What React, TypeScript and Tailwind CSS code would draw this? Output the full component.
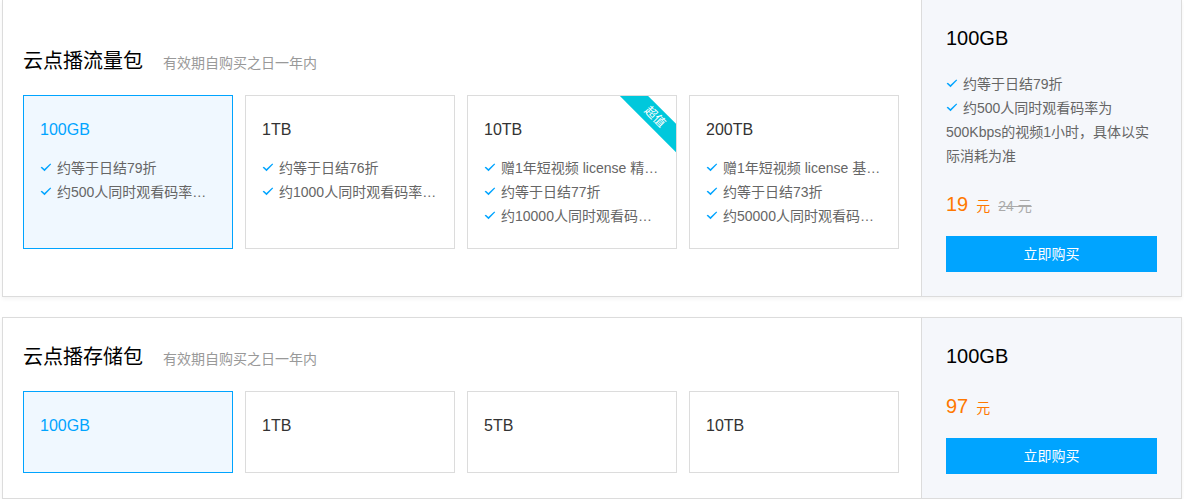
import React from "react";

type Perk = {
  summary: string;
  detail?: string;
};

type Plan = {
  size: string;
  perks?: Perk[];
  badge?: string;
  selected?: boolean;
};

type Pack = {
  id: string;
  title: string;
  note: string;
  plans: Plan[];
  price: string;
  oldPrice?: string;
};

const packs: Pack[] = [
  {
    id: "traffic",
    title: "云点播流量包",
    note: "有效期自购买之日一年内",
    price: "19",
    oldPrice: "24 元",
    plans: [
      {
        size: "100GB",
        selected: true,
        perks: [
          { summary: "约等于日结79折" },
          {
            summary: "约500人同时观看码率…",
            detail: "约500人同时观看码率为500Kbps的视频1小时，具体以实际消耗为准",
          },
        ],
      },
      {
        size: "1TB",
        perks: [{ summary: "约等于日结76折" }, { summary: "约1000人同时观看码率…" }],
      },
      {
        size: "10TB",
        badge: "超值",
        perks: [
          { summary: "赠1年短视频 license 精…" },
          { summary: "约等于日结77折" },
          { summary: "约10000人同时观看码…" },
        ],
      },
      {
        size: "200TB",
        perks: [
          { summary: "赠1年短视频 license 基…" },
          { summary: "约等于日结73折" },
          { summary: "约50000人同时观看码…" },
        ],
      },
    ],
  },
  {
    id: "storage",
    title: "云点播存储包",
    note: "有效期自购买之日一年内",
    price: "97",
    plans: [{ size: "100GB", selected: true }, { size: "1TB" }, { size: "5TB" }, { size: "10TB" }],
  },
];

function Check() {
  return (
    <svg className="mr-[5px] inline-block size-3 align-[-1px]" viewBox="0 0 12 12" fill="none" aria-hidden="true">
      <path d="M0.6 5.4 L1.9 4.8 L4.4 7 L10.3 1.5 L11.2 2.2 L4.5 9.3 Z" fill="#00a4ff" />
    </svg>
  );
}

function PlanCard({ plan }: { plan: Plan }) {
  return (
    <button
      type="button"
      aria-pressed={!!plan.selected}
      className={
        "relative flex min-w-0 cursor-pointer flex-col overflow-hidden border px-4 py-5 text-left " +
        (plan.selected ? "border-[#00a4ff] bg-[#f0f8ff]" : "border-[#dcdcdc] bg-white")
      }
    >
      <span className={"mb-3 text-base leading-7 " + (plan.selected ? "text-[#00a4ff]" : "text-[#333333]")}>
        {plan.size}
      </span>
      {plan.perks?.map((perk) => (
        <span key={perk.summary} className="w-full truncate text-sm leading-6 text-[#666666]">
          <Check />
          {perk.summary}
        </span>
      ))}
      {plan.badge && (
        <span className="absolute top-[11px] right-[-24px] w-[90px] rotate-45 bg-[#00c8dc] text-center text-xs leading-5 text-white">
          {plan.badge}
        </span>
      )}
    </button>
  );
}

function PackSection({ pack, first }: { pack: Pack; first: boolean }) {
  const current = pack.plans.find((plan) => plan.selected) ?? pack.plans[0];
  return (
    <section
      aria-labelledby={pack.id}
      className={"flex border-[#dcdcdc] bg-white shadow-[0_2px_4px_rgba(0,0,0,0.05)] " + (first ? "border-x border-b" : "border")}
    >
      <div className="flex min-w-0 flex-1 flex-col justify-center pr-[22px] pl-5">
        <div className="mb-5 flex h-7 items-baseline gap-5">
          <h2 id={pack.id} className="text-xl leading-7 text-black">
            {pack.title}
          </h2>
          <p className="text-sm leading-7 text-[#999999]">{pack.note}</p>
        </div>
        <div className="grid grid-cols-4 gap-3">
          {pack.plans.map((plan) => (
            <PlanCard key={plan.size} plan={plan} />
          ))}
        </div>
      </div>
      <aside className="w-[260px] shrink-0 border-l border-[#dcdcdc] bg-[#f5f7fb] p-6">
        <h3 className="text-xl leading-7 text-black">{current.size}</h3>
        {current.perks && (
          <ul className="mt-5 text-sm leading-6 text-[#666666]">
            {current.perks.map((perk) => (
              <li key={perk.summary}>
                <Check />
                {perk.detail ?? perk.summary}
              </li>
            ))}
          </ul>
        )}
        <p className="mt-5 mb-4 flex h-8 items-baseline gap-2 text-sm leading-8 text-[#ff7800]">
          <span className="text-xl leading-8">{pack.price}</span>
          <span>元</span>
          {pack.oldPrice && <del className="text-[#aaaaaa]">{pack.oldPrice}</del>}
        </p>
        <button type="button" className="block h-9 w-full cursor-pointer bg-[#00a4ff] text-sm text-white">
          立即购买
        </button>
      </aside>
    </section>
  );
}

export default function App() {
  return (
    <main className="flex flex-col gap-5 bg-white px-0.5 font-['Liberation_Sans','Noto_Sans_CJK_SC',sans-serif]">
      {packs.map((pack, index) => (
        <PackSection key={pack.id} pack={pack} first={index === 0} />
      ))}
    </main>
  );
}
